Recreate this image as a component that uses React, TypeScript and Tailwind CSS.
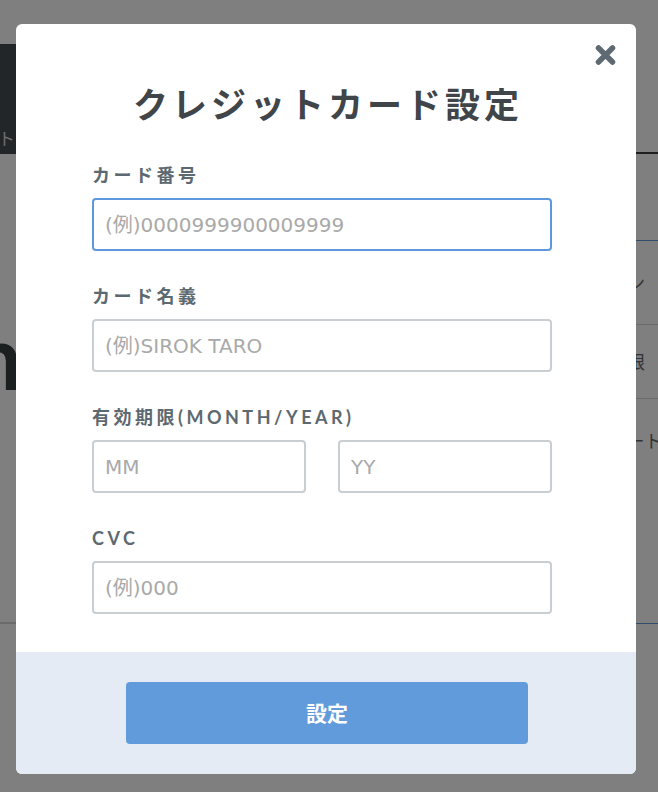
import React from "react";

const fields = [
  { label: "カード番号", placeholders: ["(例)0000999900009999"], focused: true },
  { label: "カード名義", placeholders: ["(例)SIROK TARO"] },
  { label: "有効期限(MONTH/YEAR)", placeholders: ["MM", "YY"] },
  { label: "CVC", placeholders: ["(例)000"] },
];

const menuRows = [
  { text: "料金プラン", h: "h-[84px]" },
  { text: "支払い期限", h: "h-[74px]" },
  { text: "テンプレート", h: "h-[83px]" },
];

// the page that sits under the dialog, mostly hidden
const BackgroundPage = () => (
  <div className="pt-[44px] font-['Noto_Sans_CJK_JP',sans-serif]">
    <div className="flex h-[110px]">
      <div className="flex w-[300px] shrink-0 items-end bg-[#454c51] pb-[8px]">
        <span className="-ml-[2px] text-[17px] leading-none text-[#dcdcdc]">トップ</span>
      </div>
      <div className="flex-1 border-b-2 border-[#3c3c3c]" />
    </div>

    <div className="flex justify-between">
      <div className="flex w-4 flex-col items-end">
        <h1 className="-mr-[6px] mt-[156px] whitespace-nowrap font-['Lato',sans-serif] text-[90px] font-bold leading-none text-[#363e3e]">
          Plan
        </h1>
        <div className="mt-[222px] h-[2px] w-full bg-[#d6d6d6]" />
      </div>

      <ul className="mt-[86px] w-[103px] overflow-hidden border-y border-[#629bdb]">
        {menuRows.map((row, i) => (
          <li
            key={row.text}
            className={`flex items-center whitespace-nowrap text-[18px] text-[#666] ${row.h} ${
              i < menuRows.length - 1 ? "border-b border-[#d6d6d6]" : ""
            }`}
          >
            {row.text}
          </li>
        ))}
      </ul>
    </div>
  </div>
);

const CloseIcon = () => (
  <svg width="21" height="20" viewBox="0 0 21 20" fill="none">
    <path
      d="M3.5 3 L17.5 17 M17.5 3 L3.5 17"
      stroke="#5e6a71"
      strokeWidth="5.5"
      strokeLinecap="round"
    />
  </svg>
);

const App = () => {
  return (
    <div className="relative h-[792px] w-[658px] overflow-hidden bg-white">
      <BackgroundPage />

      <div className="absolute inset-0 bg-black/50 pl-4 pt-6">
        <div className="w-[620px] overflow-hidden rounded-[6px] bg-white font-['Noto_Sans_CJK_JP',sans-serif]">
          <div className="relative px-[76px] pb-[38px] pt-[59px]">
            <button className="absolute right-[20px] top-[21px]" aria-label="close">
              <CloseIcon />
            </button>

            <h2 className="pl-[4px] text-center text-[35px] font-bold leading-[40px] tracking-[4px] text-[#3f4548]">
              クレジットカード設定
            </h2>

            <div className="mr-[8px] mt-[40px] flex flex-col gap-[33px]">
              {fields.map((field) => (
                <div key={field.label}>
                  <label className="mb-[11px] block font-['Lato','Noto_Sans_CJK_JP',sans-serif] text-[18px] font-bold leading-[24px] tracking-[3.5px] text-[#5d6970]">
                    {field.label}
                  </label>
                  <div className="flex gap-[32px]">
                    {field.placeholders.map((ph) => (
                      <input
                        key={ph}
                        type="text"
                        placeholder={ph}
                        className={`h-[53px] w-full min-w-0 rounded-[4px] border-2 bg-white px-[11px] font-['DejaVu_Sans','Noto_Sans_CJK_JP',sans-serif] text-[20px] text-[#333] outline-none placeholder:text-[#a9a9a9] ${
                          field.focused ? "border-[#5d98dd]" : "border-[#c9ced3]"
                        }`}
                      />
                    ))}
                  </div>
                </div>
              ))}
            </div>
          </div>

          <div className="bg-[#e4ebf5] py-[30px] pl-[110px] pr-[108px]">
            <button className="h-[62px] w-full rounded-[4px] bg-[#629bdb] text-[21px] font-bold text-white">
              設定
            </button>
          </div>
        </div>
      </div>
    </div>
  );
};

export default App;
